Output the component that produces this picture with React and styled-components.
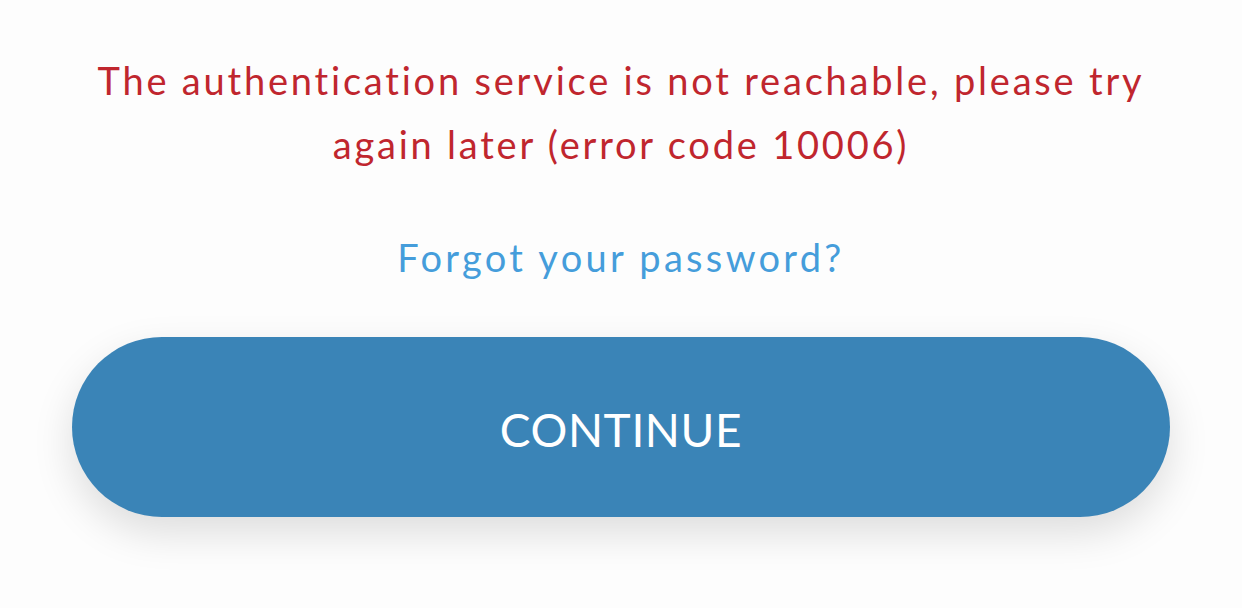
import React from "react";
import styled, { createGlobalStyle } from "styled-components";

const GlobalStyle = createGlobalStyle`
  body {
    margin: 0;
    background: #fdfdfd;
    font-family: "Lato", "Noto Sans", sans-serif;
  }
`;

const App = () => {
  return (
    <>
      <GlobalStyle />
      <Page>
        <ErrorText>
          The authentication service is not reachable, please try
          <br />
          again later (error code 10006)
        </ErrorText>
        <ForgotLink href="#">Forgot your password?</ForgotLink>
        <ContinueButton>CONTINUE</ContinueButton>
      </Page>
    </>
  );
};

//styled components
const Page = styled.div`
  width: 1242px;
  height: 608px;
  display: flex;
  flex-direction: column;
  align-items: center;
  padding: 48px 72px 0;
  box-sizing: border-box;
  overflow: hidden;
`;

const ErrorText = styled.p`
  margin: 0;
  color: #c0262e;
  font-size: 38px;
  line-height: 64px;
  text-align: center;
  letter-spacing: 2.8px;
`;

const ForgotLink = styled.a`
  margin-top: 57px;
  color: #459ddb;
  font-size: 38px;
  line-height: 48px;
  text-decoration: none;
  letter-spacing: 3.3px;
`;

const ContinueButton = styled.button`
  margin-top: 56px;
  width: 100%;
  height: 180px;
  padding: 5px 0 0;
  border: none;
  border-radius: 90px;
  background: #3a84b7;
  color: #ffffff;
  font-family: "Lato", "Noto Sans", sans-serif;
  font-size: 46px;
  letter-spacing: 0.6px;
  box-shadow: 0 16px 40px rgba(0, 0, 0, 0.13);
  cursor: pointer;
`;

export default App;
